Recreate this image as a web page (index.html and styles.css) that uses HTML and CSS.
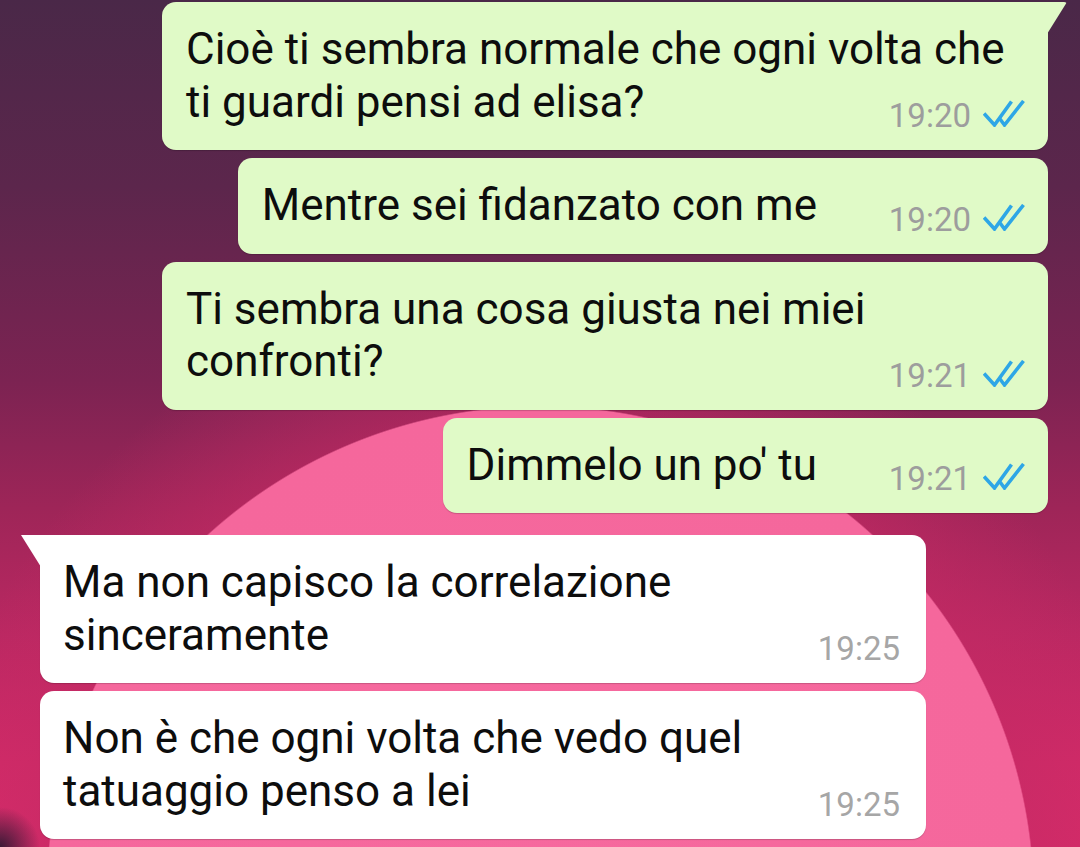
FILE: index.html
```html
<!DOCTYPE html>
<html lang="it">
<head>
    <meta charset="UTF-8">
    <meta name="viewport" content="width=device-width, initial-scale=1.0">
    <title>Chat</title>
    <link rel="stylesheet" href="styles.css">
</head>
<body>
    <div class="chat">
        <!-- outgoing group -->
        <div class="row out">
            <div class="bubble out tail wide">
                <p class="text">Cioè ti sembra normale che ogni volta che<br>ti guardi pensi ad elisa?<span class="spacer"></span></p>
                <div class="meta"><span class="time">19:20</span><svg class="ticks" viewBox="0 0 42 27"><path d="M1 13.5 L11.5 25 L28.5 1.5"/><path d="M17 19 L21.5 25 L40.5 1"/></svg></div>
            </div>
        </div>
        <div class="row out">
            <div class="bubble out">
                <p class="text">Mentre sei fidanzato con me<span class="spacer"></span></p>
                <div class="meta"><span class="time">19:20</span><svg class="ticks" viewBox="0 0 42 27"><path d="M1 13.5 L11.5 25 L28.5 1.5"/><path d="M17 19 L21.5 25 L40.5 1"/></svg></div>
            </div>
        </div>
        <div class="row out">
            <div class="bubble out wide">
                <p class="text">Ti sembra una cosa giusta nei miei<br>confronti?<span class="spacer"></span></p>
                <div class="meta"><span class="time">19:21</span><svg class="ticks" viewBox="0 0 42 27"><path d="M1 13.5 L11.5 25 L28.5 1.5"/><path d="M17 19 L21.5 25 L40.5 1"/></svg></div>
            </div>
        </div>
        <div class="row out">
            <div class="bubble out">
                <p class="text">Dimmelo un po' tu<span class="spacer"></span></p>
                <div class="meta"><span class="time">19:21</span><svg class="ticks" viewBox="0 0 42 27"><path d="M1 13.5 L11.5 25 L28.5 1.5"/><path d="M17 19 L21.5 25 L40.5 1"/></svg></div>
            </div>
        </div>

        <!-- incoming group -->
        <div class="row in first">
            <div class="bubble in tail wide">
                <p class="text">Ma non capisco la correlazione<br>sinceramente<span class="spacer"></span></p>
                <div class="meta"><span class="time">19:25</span></div>
            </div>
        </div>
        <div class="row in">
            <div class="bubble in wide">
                <p class="text">Non è che ogni volta che vedo quel<br>tatuaggio penso a lei<span class="spacer"></span></p>
                <div class="meta"><span class="time">19:25</span></div>
            </div>
        </div>
    </div>
</body>
</html>
```

FILE: styles.css
```css
html, body {
    margin: 0;
    height: 100%;
}

body {
    overflow: hidden;
    font-family: Roboto, "Noto Sans", Arial, sans-serif;
    background:
        radial-gradient(circle 40px at 0 847px, #3a1a36 0, rgba(58, 26, 54, 0) 100%),
        radial-gradient(circle 494px at 540px 900px, #f6699e 0, #f5679c 493px, rgba(245, 103, 156, 0) 494.5px),
        radial-gradient(circle 620px at 540px 900px, rgba(196, 42, 100, 0.55) 80%, rgba(196, 42, 100, 0) 100%),
        linear-gradient(to bottom, #4a2848 0%, #5c264c 22%, #7c2352 45%, #9e2558 60%, #bb2862 75%, #d22a68 90%, #d82b6a 100%);
}

.chat {
    display: flex;
    flex-direction: column;
    gap: 8px;
    padding: 2px 32px 0 40px;
}

.row {
    display: flex;
}

.row.out {
    justify-content: flex-end;
}

.row.in {
    justify-content: flex-start;
}

.row.first {
    margin-top: 14px;
}

.bubble {
    position: relative;
    display: grid;
    box-sizing: border-box;
    max-width: 886px;
    padding: 21px 23px 22px 24px;
    border-radius: 14px;
    box-shadow: 0 1px 1px rgba(0, 0, 0, 0.18);
}

.bubble.wide {
    width: 886px;
}

.bubble.out {
    background-color: #e0fac7;
}

.bubble.in {
    background-color: #ffffff;
    padding: 21px 26px 22px 23px;
}

.bubble.out.tail {
    border-top-right-radius: 0;
}

.bubble.in.tail {
    border-top-left-radius: 0;
}

.bubble.out.tail::before {
    content: "";
    position: absolute;
    top: 0;
    right: -19px;
    width: 20px;
    height: 32px;
    background-color: #e0fac7;
    clip-path: polygon(0 0, 100% 0, 0 100%);
    border-top-right-radius: 3px;
}

.bubble.in.tail::before {
    content: "";
    position: absolute;
    top: 0;
    left: -19px;
    width: 20px;
    height: 32px;
    background-color: #ffffff;
    clip-path: polygon(0 0, 100% 0, 100% 100%);
}

.text {
    grid-area: 1 / 1;
    margin: 0;
    font-size: 44px;
    line-height: 52.5px;
    color: #0d0d0d;
}

.spacer {
    display: inline-block;
    width: 208px;
}

.bubble.in .spacer {
    width: 150px;
}

.meta {
    grid-area: 1 / 1;
    justify-self: end;
    align-self: end;
    display: flex;
    align-items: flex-end;
    gap: 12px;
}

.time {
    font-size: 33px;
    line-height: 24px;
    color: #9d9d9d;
}

.bubble.in .time {
    color: #a6a6a6;
}

.ticks {
    width: 42px;
    height: 27px;
    margin-bottom: 1px;
    fill: none;
    stroke: #2ea6e6;
    stroke-width: 3.6;
}
```
